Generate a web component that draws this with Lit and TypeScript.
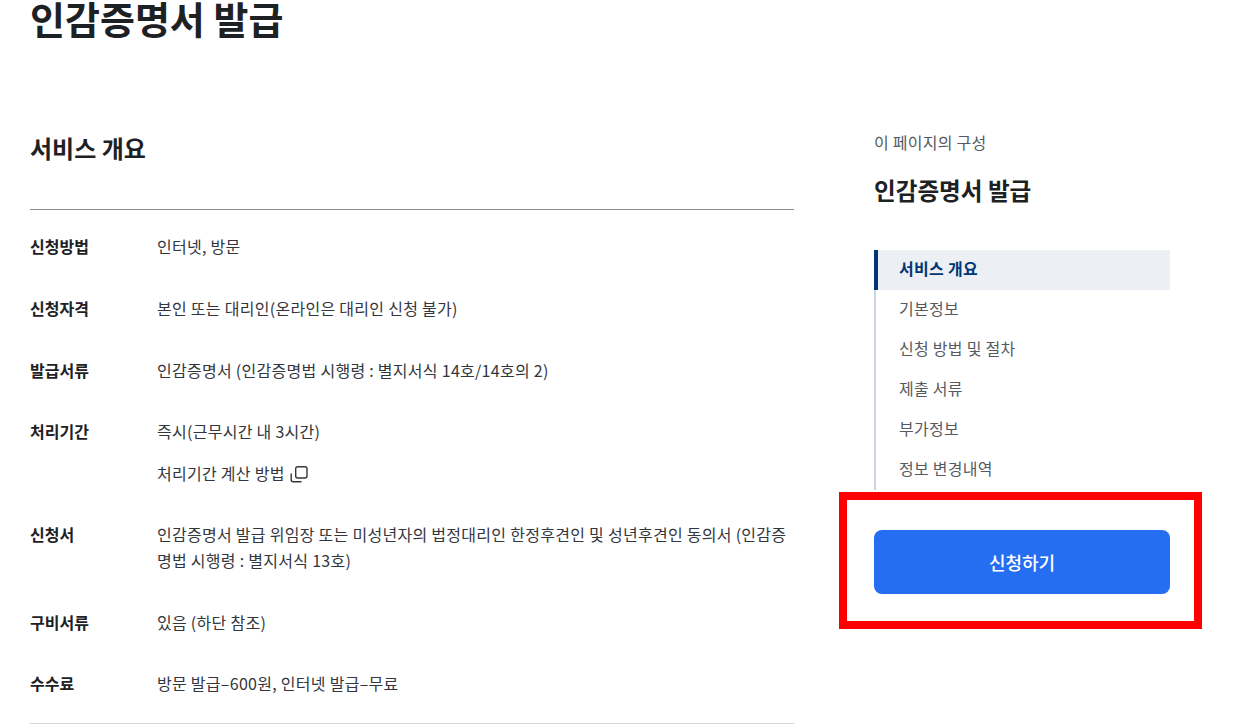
import { LitElement, css, html } from "lit";
import { customElement } from "lit/decorators.js";

const rows = [
  { label: "신청방법", lines: ["인터넷, 방문"] },
  { label: "신청자격", lines: ["본인 또는 대리인(온라인은 대리인 신청 불가)"] },
  { label: "발급서류", lines: ["인감증명서 (인감증명법 시행령 : 별지서식 14호/14호의 2)"] },
  { label: "처리기간", lines: ["즉시(근무시간 내 3시간)"], link: "처리기간 계산 방법" },
  {
    label: "신청서",
    lines: ["인감증명서 발급 위임장 또는 미성년자의 법정대리인 한정후견인 및 성년후견인 동의서 (인감증명법 시행령 : 별지서식 13호)"],
  },
  { label: "구비서류", lines: ["있음 (하단 참조)"] },
  { label: "수수료", lines: ["방문 발급–600원, 인터넷 발급–무료"] },
];

const navItems = ["서비스 개요", "기본정보", "신청 방법 및 절차", "제출 서류", "부가정보", "정보 변경내역"];

@customElement("app-root")
export class AppRoot extends LitElement {
  static styles = css`
    :host {
      display: block;
      height: 726px;
      overflow: hidden;
      background: #fff;
      color: #1e2124;
      font-family: "Noto Sans CJK KR", "Noto Sans", sans-serif;
      font-size: 16px;
      line-height: 25.6px;
    }

    .page {
      padding-left: 30px;
    }

    h1 {
      margin: 0;
      font-size: 38px;
      line-height: 36px;
      font-weight: 700;
    }

    .columns {
      display: flex;
      gap: 80px;
      margin-top: 94px;
    }

    .content {
      width: 764px;
    }

    h2 {
      margin: 0;
      padding-bottom: 43px;
      font-size: 24px;
      line-height: 36px;
      font-weight: 700;
      border-bottom: 1px solid #8a8a8a;
    }

    .rows {
      padding: 24.45px 0 26.55px;
      border-bottom: 1px solid #d6d6d6;
    }

    .row {
      display: flex;
    }

    .row + .row {
      margin-top: 36px;
    }

    .label {
      flex: 0 0 127px;
      font-weight: 700;
    }

    .value {
      flex: 1;
      color: #33363d;
      letter-spacing: 0.28px;
    }

    .value p {
      margin: 0;
    }

    .link {
      display: flex;
      align-items: center;
      gap: 5px;
      margin-top: 16px;
    }

    .link svg {
      display: block;
    }

    .side {
      width: 296px;
    }

    .eyebrow {
      color: #555a60;
      letter-spacing: 0.25px;
    }

    .side-title {
      margin-top: 16px;
      font-size: 23.6px;
      line-height: 36px;
      font-weight: 700;
    }

    nav {
      margin-top: 42px;
    }

    .nav-item {
      height: 40px;
      padding: 0 0 2px 23px;
      box-sizing: border-box;
      display: flex;
      align-items: center;
      color: #555a60;
      letter-spacing: 0.28px;
      border-left: 2px solid #ccd5e3;
    }

    .nav-item.active {
      padding-left: 21px;
      border-left: 4px solid #003675;
      background: #eceff4;
      color: #003675;
      font-weight: 700;
    }

    .action {
      position: relative;
      margin-top: 40px;
    }

    .apply {
      display: block;
      width: 100%;
      height: 64px;
      border: 0;
      border-radius: 8px;
      background: #256ef1;
      color: #fff;
      font: 500 18px "Noto Sans CJK KR", sans-serif;
    }

    .highlight {
      position: absolute;
      top: -38px;
      right: -32px;
      bottom: -35px;
      left: -35px;
      border: 8px solid #ff0000;
      pointer-events: none;
    }
  `;

  render() {
    return html`
      <div class="page">
        <h1>인감증명서 발급</h1>
        <div class="columns">
          <main class="content">
            <h2>서비스 개요</h2>
            <div class="rows">
              ${rows.map(
                (row) => html`
                  <div class="row">
                    <div class="label">${row.label}</div>
                    <div class="value">
                      ${row.lines.map((line) => html`<p>${line}</p>`)}
                      ${row.link
                        ? html`<div class="link">
                            ${row.link}
                            <svg width="18" height="18" viewBox="0 0 18 18" fill="none" stroke="#33363d" stroke-width="1.4">
                              <rect x="5.7" y="1.7" width="11.3" height="11.3" rx="2" />
                              <path d="M1.2 8.5V14.8a2 2 0 0 0 2 2H11.5" />
                            </svg>
                          </div>`
                        : ""}
                    </div>
                  </div>
                `
              )}
            </div>
          </main>
          <aside class="side">
            <div class="eyebrow">이 페이지의 구성</div>
            <div class="side-title">인감증명서 발급</div>
            <nav>
              ${navItems.map(
                (item, i) => html`<div class="nav-item ${i === 0 ? "active" : ""}">${item}</div>`
              )}
            </nav>
            <div class="action">
              <button class="apply">신청하기</button>
              <div class="highlight"></div>
            </div>
          </aside>
        </div>
      </div>
    `;
  }
}
